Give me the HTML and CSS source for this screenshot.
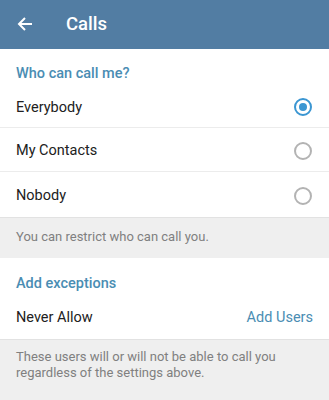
FILE: index.html
```html
<!DOCTYPE html>
<html>
<head>
<meta charset="utf-8">
<link rel="stylesheet" href="styles.css">
</head>
<body>
<header class="bar">
  <svg class="back" width="16" height="16" viewBox="0 0 16 16"><path d="M15 8H2M8 2L2 8l6 6" fill="none" stroke="#fff" stroke-width="2"/></svg>
  <span class="title">Calls</span>
</header>
<section class="card">
  <div class="sec-title">Who can call me?</div>
  <div class="row first"><span>Everybody</span><span class="radio on"></span></div>
  <div class="row"><span>My Contacts</span><span class="radio"></span></div>
  <div class="row last"><span>Nobody</span><span class="radio"></span></div>
</section>
<div class="note one">You can restrict who can call you.</div>
<section class="card">
  <div class="sec-title two">Add exceptions</div>
  <div class="row last"><span>Never Allow</span><span class="link">Add Users</span></div>
</section>
<div class="note two">These users will or will not be able to call you regardless of the settings above.</div>
</body>
</html>
```
FILE: styles.css
```css
html, body { margin: 0; padding: 0; }
body {
  width: 329px;
  height: 400px;
  overflow: hidden;
  background: #efefef;
  font-family: Roboto, "Liberation Sans", sans-serif;
}
.bar {
  height: 49px;
  background: #527da3;
  display: flex;
  align-items: center;
  padding-left: 17px;
  box-sizing: border-box;
}
.back { display: block; margin-top: -2px; }
.title {
  color: #fff;
  font-size: 18.5px;
  font-weight: 500;
  margin-left: 33px;
  margin-top: -2px;
}
.card { background: #fff; }
.sec-title {
  color: #4a8db3;
  font-size: 14.5px;
  font-weight: 500;
  padding: 16px 16px 0;
  height: 36px;
  box-sizing: border-box;
  line-height: 18px;
}
.sec-title.two { padding-top: 17px; }
.row {
  height: 44px;
  display: flex;
  align-items: center;
  justify-content: space-between;
  padding: 2px 16px 0;
  font-size: 14.5px;
  color: #212121;
  border-bottom: 1px solid #ececec;
  box-sizing: border-box;
}
.row.first { height: 43px; }
.row.last { border-bottom: none; height: 45px; }
.radio {
  width: 18px;
  height: 18px;
  box-sizing: border-box;
  border: 2px solid #b3b3b3;
  border-radius: 50%;
  margin-right: 1px;
  position: relative;
}
.radio.on { border-color: #3b96d2; }
.radio.on::after {
  content: "";
  position: absolute;
  left: 3px; top: 3px;
  width: 8px; height: 8px;
  border-radius: 50%;
  background: #3b96d2;
}
.link { color: #4a8db3; font-size: 14.5px; }
.note {
  color: #808080;
  font-size: 13px;
  line-height: 16px;
  padding: 11px 16px 0;
  box-sizing: border-box;
  border-top: 1px solid #e2e2e2;
}
.note.one { height: 41px; }
.note.two { padding-top: 9px; padding-right: 40px; }
```
